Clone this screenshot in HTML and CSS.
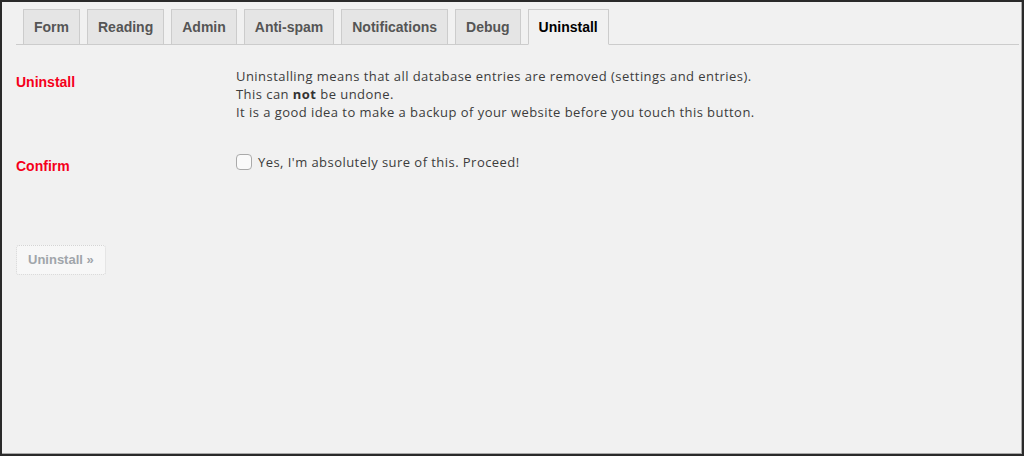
FILE: index.html
```html
<!DOCTYPE html>
<html>
<head>
<meta charset="utf-8">
<link rel="stylesheet" href="styles.css">
</head>
<body>
<div class="frame">
  <div class="wrap">
    <nav class="tabs">
      <a class="tab">Form</a>
      <a class="tab">Reading</a>
      <a class="tab">Admin</a>
      <a class="tab">Anti-spam</a>
      <a class="tab">Notifications</a>
      <a class="tab">Debug</a>
      <a class="tab active">Uninstall</a>
    </nav>
    <div class="form-table">
      <div class="row">
        <div class="th">Uninstall</div>
        <div class="td desc">
          Uninstalling means that all database entries are removed (settings and entries).<br>
          This can <strong>not</strong> be undone.<br>
          It is a good idea to make a backup of your website before you touch this button.
        </div>
      </div>
      <div class="row">
        <div class="th">Confirm</div>
        <div class="td">
          <label class="check"><input type="checkbox" class="cb"> Yes, I'm absolutely sure of this. Proceed!</label>
        </div>
      </div>
    </div>
    <div class="submit">
      <button class="button" disabled>Uninstall &raquo;</button>
    </div>
  </div>
</div>
</body>
</html>
```

FILE: styles.css
```css
html, body {
  margin: 0;
  padding: 0;
  background: #1e1e1e;
}
.frame {
  box-sizing: border-box;
  width: 1024px;
  height: 456px;
  border-top: 2px solid #2a2a2a;
  border-left: 2px solid #2a2a2a;
  border-right: 2px solid #2a2a2a;
  border-bottom: 2px solid #2a2a2a;
  background: #f1f1f1;
  box-shadow: inset -1px -1px 0 #a8a8a8;
  font-family: "Liberation Sans", Arial, sans-serif;
  color: #444;
}
.wrap {
  padding: 7px 3px 0 14px;
}
.tabs {
  display: flex;
  border-bottom: 1px solid #ccc;
  padding-left: 0;
}
.tab {
  display: block;
  margin-left: 7px;
  margin-bottom: -1px;
  padding: 5px 10px;
  border: 1px solid #ccc;
  background: #e5e5e5;
  color: #555;
  font-size: 14px;
  font-weight: 700;
  line-height: 24px;
  white-space: nowrap;
}
.tab.active {
  background: #f1f1f1;
  border-bottom-color: #f1f1f1;
  color: #000;
}
.form-table {
  margin-top: 8px;
}
.row {
  display: flex;
}
.th {
  box-sizing: border-box;
  width: 210px;
  flex: none;
  padding: 20px 10px 20px 0;
  font-size: 14px;
  font-weight: 700;
  line-height: 18px;
  color: #f5001a;
}
.td {
  padding: 15px 10px;
  font-family: "Open Sans", "Liberation Sans", Arial, sans-serif;
  font-size: 13px;
  line-height: 18px;
  letter-spacing: 0.45px;
  color: #3c3c3c;
}
.desc {
  padding-top: 14px;
  padding-bottom: 16px;
}
.desc strong {
  font-weight: 700;
  color: #333;
}
.check {
  display: flex;
  align-items: center;
  margin-top: 1px;
}
.cb {
  appearance: none;
  -webkit-appearance: none;
  box-sizing: border-box;
  width: 16px;
  height: 16px;
  margin: 0 6px 0 0;
  border: 1px solid #aaaaaa;
  border-radius: 4px;
  background: #fafafa;
}
.submit {
  padding-top: 50px;
}
.button {
  box-sizing: border-box;
  height: 30px;
  padding: 0 11px;
  border: 1px dotted #d4d4d4;
  border-radius: 3px;
  background: #f7f7f7;
  color: #a0a5aa;
  font-family: "Liberation Sans", Arial, sans-serif;
  font-size: 13px;
  font-weight: 700;
  line-height: 28px;
}
```
